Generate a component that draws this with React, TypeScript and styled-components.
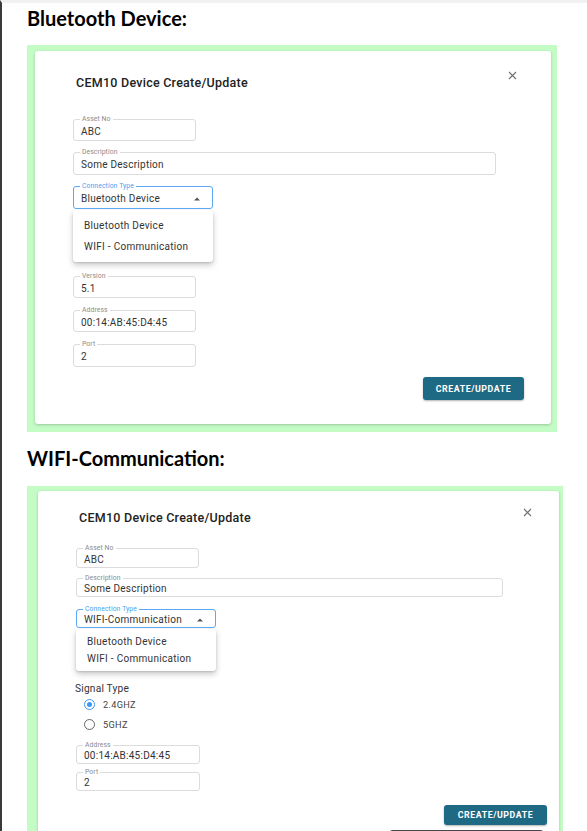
import React from 'react';
import styled, { createGlobalStyle } from 'styled-components';

const Global = createGlobalStyle`
  html, body { margin: 0; padding: 0; background: #fff; }
  body { font-family: Roboto, "Liberation Sans", Arial, sans-serif; }
`;

const Page = styled.div`
  box-sizing: border-box;
  width: 587px;
  height: 831px;
  overflow: hidden;
  border-left: 2px solid #3a3a3a;
  border-top: 3px solid #f1f1f1;
  padding-left: 25px;
`;

const SectionTitle = styled.h2<{ $mt: number }>`
  margin: ${p => p.$mt}px 0 0 0;
  font-family: Lato, "Open Sans", sans-serif;
  font-weight: 700;
  font-size: 20px;
  line-height: 22px;
  color: #000;
`;

const Frame = styled.div<{ $w: number; $pad: string; $mt: number }>`
  box-sizing: border-box;
  width: ${p => p.$w}px;
  margin-top: ${p => p.$mt}px;
  padding: ${p => p.$pad};
  background: #c4fcc5;
`;

const Card = styled.div<{ $pad: string }>`
  display: flex;
  flex-direction: column;
  align-items: flex-start;
  padding: ${p => p.$pad};
  background: #fff;
  border-radius: 3px;
  box-shadow: 0 1px 3px rgba(0, 0, 0, 0.22);
`;

const Header = styled.div`
  align-self: stretch;
  display: flex;
  justify-content: space-between;
  align-items: flex-start;
  padding-left: 3px;
`;

const DialogTitle = styled.div`
  font-size: 12.5px;
  line-height: 14px;
  font-weight: 500;
  letter-spacing: 0.25px;
  color: #222;
`;

const CloseButton = styled.div<{ $mt: number; $mr: number }>`
  display: flex;
  margin-top: ${p => p.$mt}px;
  margin-right: ${p => p.$mr}px;
`;

const FieldBox = styled.div<{ $w: number; $h: number; $mt: number; $focused?: boolean }>`
  position: relative;
  box-sizing: border-box;
  width: ${p => p.$w}px;
  height: ${p => p.$h}px;
  margin-top: ${p => p.$mt}px;
  display: flex;
  align-items: center;
  justify-content: space-between;
  padding: 2px 12px 0 7px;
  border: 1px solid ${p => (p.$focused ? '#5aa9f2' : '#dcdcdc')};
  border-radius: 3px;
  font-size: 10px;
  letter-spacing: 0.25px;
  color: #333;
`;

const FieldLabel = styled.span<{ $focused?: boolean }>`
  position: absolute;
  top: -4px;
  left: 6px;
  padding: 0 2px;
  background: #fff;
  font-size: 6.8px;
  line-height: 7px;
  letter-spacing: 0.1px;
  color: ${p => (p.$focused ? '#4a9ff0' : '#8a8a8a')};
`;

const Menu = styled.div<{ $w: number; $pad: number; $mt: number }>`
  box-sizing: border-box;
  width: ${p => p.$w}px;
  margin-top: ${p => p.$mt}px;
  padding: ${p => p.$pad}px 0;
  background: #fff;
  border-radius: 3px;
  box-shadow: 0 3px 6px rgba(0, 0, 0, 0.22), 0 1px 2px rgba(0, 0, 0, 0.12);
`;

const MenuItem = styled.div<{ $h: number }>`
  height: ${p => p.$h}px;
  display: flex;
  align-items: center;
  padding-left: 11px;
  font-size: 10px;
  letter-spacing: 0.3px;
  color: #333;
`;

const GroupLabel = styled.div<{ $mt: number }>`
  margin-top: ${p => p.$mt}px;
  margin-left: -1px;
  font-size: 10.2px;
  line-height: 11px;
  letter-spacing: 0.2px;
  color: #333;
`;

const RadioRow = styled.div`
  height: 20px;
  display: flex;
  align-items: center;
  gap: 8px;
  padding-left: 8px;
  font-size: 9.2px;
  letter-spacing: 0.3px;
  color: #444;
`;

const RadioCircle = styled.span<{ $checked?: boolean }>`
  box-sizing: border-box;
  width: 11px;
  height: 11px;
  border-radius: 50%;
  border: 1.3px solid ${p => (p.$checked ? '#3d97f0' : '#666')};
  display: flex;
  align-items: center;
  justify-content: center;
  &::after {
    content: '';
    width: 5px;
    height: 5px;
    border-radius: 50%;
    background: ${p => (p.$checked ? '#3d97f0' : 'transparent')};
  }
`;

const SubmitButton = styled.button<{ $w: number; $h: number; $mt: number }>`
  align-self: flex-end;
  width: ${p => p.$w}px;
  height: ${p => p.$h}px;
  margin-top: ${p => p.$mt}px;
  padding: 0;
  border: none;
  border-radius: 3px;
  background: #1e6a84;
  box-shadow: 0 1px 2px rgba(0, 0, 0, 0.3);
  color: #fff;
  font-family: Roboto, "Liberation Sans", Arial, sans-serif;
  font-size: 8.8px;
  font-weight: 700;
  letter-spacing: 0.55px;
`;

const Snackbar = styled.div`
  align-self: flex-end;
  width: 157px;
  height: 20px;
  margin-top: 5px;
  margin-right: 2px;
  background: #484848;
  border-radius: 5px 5px 0 0;
`;

const CloseIcon = () => (
  <svg width="9" height="9" viewBox="0 0 9 9">
    <path d="M1 1L8 8M8 1L1 8" stroke="#707070" strokeWidth="1.1" fill="none" />
  </svg>
);

const Caret = () => (
  <svg width="6" height="4" viewBox="0 0 6 4">
    <path d="M0 3.5L3 0.5L6 3.5Z" fill="#555" />
  </svg>
);

type FieldProps = { label: string; value: string; w: number; h: number; mt: number; focused?: boolean; select?: boolean };

const Field = ({ label, value, w, h, mt, focused, select }: FieldProps) => (
  <FieldBox $w={w} $h={h} $mt={mt} $focused={focused}>
    <FieldLabel $focused={focused}>{label}</FieldLabel>
    <span>{value}</span>
    {select && <Caret />}
  </FieldBox>
);

export default function App() {
  return (
    <>
      <Global />
      <Page>
        <SectionTitle $mt={4}>Bluetooth Device:</SectionTitle>
        <Frame $w={530} $pad="6px 6px 8px 8px" $mt={16}>
          <Card $pad="25px 27px 24px 38px">
            <Header>
              <DialogTitle>CEM10 Device Create/Update</DialogTitle>
              <CloseButton $mt={-5} $mr={7}><CloseIcon /></CloseButton>
            </Header>
            <Field label="Asset No" value="ABC" w={123} h={22} mt={29} />
            <Field label="Description" value="Some Description" w={423} h={23} mt={11} />
            <Field label="Connection Type" value="Bluetooth Device" w={140} h={23} mt={11} focused select />
            <Menu $w={140} $pad={5} $mt={1}>
              <MenuItem $h={21}>Bluetooth Device</MenuItem>
              <MenuItem $h={21}>WIFI - Communication</MenuItem>
            </Menu>
            <Field label="Version" value="5.1" w={123} h={22} mt={14} />
            <Field label="Address" value="00:14:AB:45:D4:45" w={123} h={22} mt={12} />
            <Field label="Port" value="2" w={123} h={23} mt={12} />
            <SubmitButton $w={101} $h={23} $mt={10}>CREATE/UPDATE</SubmitButton>
          </Card>
        </Frame>

        <SectionTitle $mt={15}>WIFI-Communication:</SectionTitle>
        <Frame $w={536} $pad="5px 4px 0 11px" $mt={17}>
          <Card $pad="20px 12px 20px 38px">
            <Header>
              <DialogTitle>CEM10 Device Create/Update</DialogTitle>
              <CloseButton $mt={-3} $mr={15}><CloseIcon /></CloseButton>
            </Header>
            <Field label="Asset No" value="ABC" w={123} h={20} mt={23} />
            <Field label="Description" value="Some Description" w={427} h={19} mt={10} />
            <Field label="Connection Type" value="WIFI-Communication" w={140} h={19} mt={12} focused select />
            <Menu $w={140} $pad={4} $mt={1}>
              <MenuItem $h={17}>Bluetooth Device</MenuItem>
              <MenuItem $h={17}>WIFI - Communication</MenuItem>
            </Menu>
            <GroupLabel $mt={12}>Signal Type</GroupLabel>
            <RadioRow><RadioCircle $checked />2.4GHZ</RadioRow>
            <RadioRow><RadioCircle />5GHZ</RadioRow>
            <Field label="Address" value="00:14:AB:45:D4:45" w={124} h={19} mt={11} />
            <Field label="Port" value="2" w={124} h={19} mt={8} />
            <SubmitButton $w={103} $h={20} $mt={14}>CREATE/UPDATE</SubmitButton>
            <Snackbar />
          </Card>
        </Frame>
      </Page>
    </>
  );
}
